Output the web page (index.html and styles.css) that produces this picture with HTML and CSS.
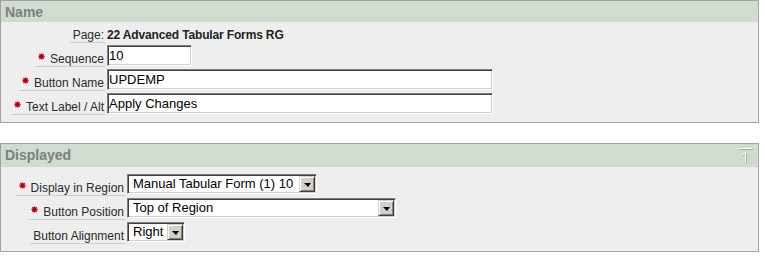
FILE: index.html
```html
<!DOCTYPE html>
<html lang="en">
<head>
<meta charset="utf-8">
<title>Button Attributes</title>
<link rel="stylesheet" href="styles.css">
</head>
<body>
<section class="panel">
  <div class="panel-head">
    <h2 class="panel-title">Name</h2>
  </div>
  <div class="panel-body">
    <div class="form form-name">
      <label class="lbl">Page:</label>
      <span class="field field-text"><b class="val">22 Advanced Tabular Forms RG</b></span>

      <label class="lbl"><svg class="req" viewBox="0 0 8 8" width="7" height="7"><path d="M4 0.5V7.5M0.5 4H7.5M1.5 1.5L6.5 6.5M6.5 1.5L1.5 6.5"/></svg>Sequence</label>
      <span class="field"><input class="input w-seq" type="text" value="10"></span>

      <label class="lbl"><svg class="req" viewBox="0 0 8 8" width="7" height="7"><path d="M4 0.5V7.5M0.5 4H7.5M1.5 1.5L6.5 6.5M6.5 1.5L1.5 6.5"/></svg>Button Name</label>
      <span class="field"><input class="input w-long" type="text" value="UPDEMP"></span>

      <label class="lbl"><svg class="req" viewBox="0 0 8 8" width="7" height="7"><path d="M4 0.5V7.5M0.5 4H7.5M1.5 1.5L6.5 6.5M6.5 1.5L1.5 6.5"/></svg>Text Label / Alt</label>
      <span class="field"><input class="input w-long" type="text" value="Apply Changes"></span>
    </div>
  </div>
</section>

<section class="panel panel-second">
  <div class="panel-head panel-head-tall">
    <h2 class="panel-title">Displayed</h2>
    <svg class="top-icon" viewBox="0 0 16 16" width="16" height="16">
      <path class="top-icon-shadow" d="M2 2.5H16M9.5 6V16M6 9.5L9.5 6L13 9.5"/>
      <path class="top-icon-main" d="M1 1.5H15M8.5 5V15M5.5 8L8.5 5L11.5 8"/>
    </svg>
  </div>
  <div class="panel-body panel-body-second">
    <div class="form form-display">
      <label class="lbl"><svg class="req" viewBox="0 0 8 8" width="7" height="7"><path d="M4 0.5V7.5M0.5 4H7.5M1.5 1.5L6.5 6.5M6.5 1.5L1.5 6.5"/></svg>Display in Region</label>
      <span class="field field-sel">
        <span class="select w-region"><span class="select-value">Manual Tabular Form (1) 10</span><span class="select-btn"><span class="tri"></span></span></span>
      </span>

      <label class="lbl"><svg class="req" viewBox="0 0 8 8" width="7" height="7"><path d="M4 0.5V7.5M0.5 4H7.5M1.5 1.5L6.5 6.5M6.5 1.5L1.5 6.5"/></svg>Button Position</label>
      <span class="field field-sel">
        <span class="select w-position"><span class="select-value">Top of Region</span><span class="select-btn"><span class="tri"></span></span></span>
      </span>

      <label class="lbl">Button Alignment</label>
      <span class="field field-sel">
        <span class="select w-align"><span class="select-value">Right</span><span class="select-btn"><span class="tri"></span></span></span>
      </span>
    </div>
  </div>
</section>
</body>
</html>
```

FILE: styles.css
```css
html, body {
  margin: 0;
  padding: 0;
  background: #ffffff;
}

body {
  font-family: "Liberation Sans", Arial, sans-serif;
  font-size: 12px;
  color: #2a2a2a;
}

.panel {
  width: 759px;
  box-sizing: border-box;
  border: 1px solid #a3a3a3;
  background: #eeeeee;
}

.panel-second {
  margin-top: 20px;
}

.panel-head {
  height: 21px;
  box-sizing: border-box;
  padding: 3px 5px 0 4px;
  background: #cfdccf;
  display: flex;
  justify-content: space-between;
  align-items: flex-start;
}

.panel-head-tall {
  height: 23px;
}

.panel-title {
  margin: 0;
  font-size: 14px;
  line-height: 16px;
  font-weight: bold;
  color: #808080;
}

.top-icon {
  display: block;
  margin-top: 0;
  fill: none;
  stroke-width: 1;
}

.top-icon-main {
  stroke: #ffffff;
}

.top-icon-shadow {
  stroke: #9aa99a;
}

.panel-body {
  height: 100px;
  box-sizing: border-box;
  padding: 3px 0 7px 10px;
}

.panel-body-second {
  height: 84px;
  padding-top: 5px;
}

.form {
  display: grid;
  grid-template-columns: auto 1fr;
  column-gap: 2px;
}

.form-name {
  grid-template-rows: 18px 24px 24px 24px;
}

.form-display {
  grid-template-columns: 115px 1fr;
  column-gap: 1px;
  grid-template-rows: 24px 24px 24px;
}

.lbl {
  justify-self: end;
  align-self: end;
  line-height: 14px;
  padding: 0 1px 0 3px;
  border-bottom: 1px solid #cdcdcd;
  color: #2a2a2a;
  white-space: nowrap;
}

.form-display .lbl {
  padding-right: 2px;
}

.req {
  display: inline-block;
  vertical-align: 3px;
  margin-right: 5px;
  fill: none;
  stroke: #c00000;
  stroke-width: 1.6;
}

.field {
  align-self: start;
  padding-top: 2px;
  display: flex;
}

.field-text {
  align-self: end;
  padding-top: 0;
  padding-bottom: 1px;
}

.val {
  font-weight: bold;
  line-height: 14px;
  color: #222222;
  letter-spacing: -0.15px;
}

.input {
  box-sizing: border-box;
  height: 21px;
  margin: 0;
  padding: 0 1px;
  font-family: "Liberation Sans", Arial, sans-serif;
  font-size: 13px;
  color: #000000;
  background: #ffffff;
  border: 1px solid;
  border-color: #808080 #ffffff #ffffff #808080;
  box-shadow: inset 1px 1px 0 #404040, inset -1px -1px 0 #d4d0c8;
  outline: none;
}

.w-seq {
  width: 85px;
}

.w-long {
  width: 386px;
}

.select {
  box-sizing: border-box;
  height: 20px;
  display: flex;
  align-items: center;
  background: #ffffff;
  border: 1px solid;
  border-color: #808080 #ffffff #ffffff #808080;
  box-shadow: inset 1px 1px 0 #404040, inset -1px -1px 0 #d4d0c8;
  padding: 1px;
  font-size: 13px;
  color: #000000;
}

.w-region {
  width: 190px;
}

.w-position {
  width: 269px;
}

.w-align {
  width: 58px;
}

.select-value {
  flex: 1;
  padding-left: 4px;
  line-height: 16px;
  white-space: nowrap;
  overflow: hidden;
}

.select-btn {
  box-sizing: border-box;
  width: 16px;
  height: 16px;
  background: #d4d0c8;
  border: 1px solid;
  border-color: #d4d0c8 #404040 #404040 #d4d0c8;
  box-shadow: inset 1px 1px 0 #ffffff, inset -1px -1px 0 #808080;
  display: flex;
  align-items: center;
  justify-content: center;
}

.tri {
  width: 0;
  height: 0;
  border-left: 4px solid transparent;
  border-right: 3px solid transparent;
  border-top: 4px solid #000000;
  margin-top: 1px;
}
```
